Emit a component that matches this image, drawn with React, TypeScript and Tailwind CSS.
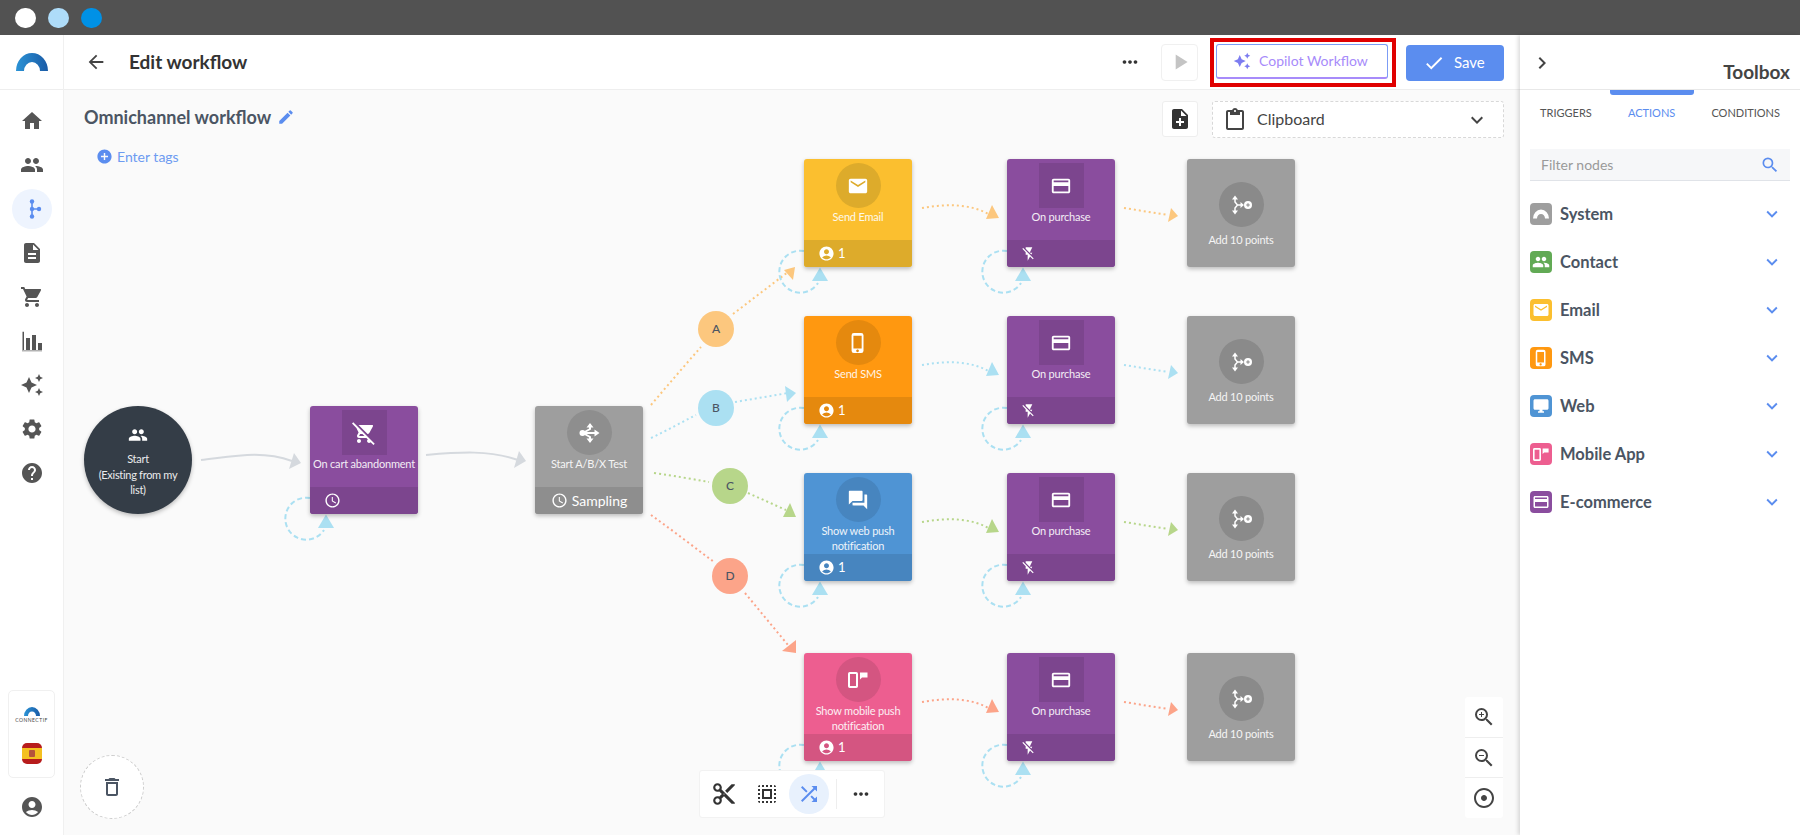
import type { ReactNode } from "react";
import {
  MdAccessTime,
  MdAccountCircle,
  MdAddCircle,
  MdAdjust,
  MdArrowBack,
  MdAutoAwesome,
  MdCheck,
  MdChevronRight,
  MdContentCut,
  MdCreditCard,
  MdDescription,
  MdDesktopWindows,
  MdEdit,
  MdEmail,
  MdExpandMore,
  MdFlashOff,
  MdForum,
  MdHelp,
  MdHome,
  MdMoreHoriz,
  MdNoteAdd,
  MdOutlineContentPaste,
  MdOutlineDelete,
  MdPeople,
  MdPhoneIphone,
  MdPlayArrow,
  MdRemoveShoppingCart,
  MdSearch,
  MdSelectAll,
  MdSettings,
  MdShoppingCart,
  MdShuffle,
  MdZoomIn,
  MdZoomOut,
} from "react-icons/md";

const LogoArc = ({ className }: { className?: string }) => (
  <svg viewBox="0 0 32 18" className={className}>
    <defs>
      <linearGradient id="arcGrad" x1="0" x2="1" y1="0" y2="0">
        <stop offset="0" stopColor="#2b93d6" />
        <stop offset="1" stopColor="#1a5ba6" />
      </linearGradient>
    </defs>
    <path d="M0 18 A16 18 0 0 1 32 18 H24 A8 9 0 0 0 8 18 Z" fill="url(#arcGrad)" />
  </svg>
);

const WhiteArc = () => (
  <svg viewBox="0 0 32 18" className="w-[16px] h-[10px]">
    <path d="M0 18 A16 18 0 0 1 32 18 H24 A8 9 0 0 0 8 18 Z" fill="#fff" />
  </svg>
);

const WorkflowIcon = () => (
  <svg viewBox="0 0 24 24" className="w-6 h-6" fill="#5b8def" stroke="#5b8def">
    <path d="M12 4.5 V19.5 M12 12 H19" strokeWidth="1.6" />
    <circle cx="12" cy="4.5" r="2.2" stroke="none" />
    <circle cx="12" cy="12" r="2.2" stroke="none" />
    <circle cx="12" cy="19.5" r="2.2" stroke="none" />
    <circle cx="19" cy="12" r="2.2" stroke="none" />
  </svg>
);

const ChartIcon = () => (
  <svg viewBox="0 0 24 24" className="w-6 h-6" fill="currentColor">
    <path d="M2.5 2.7 H4 V21 H2.5 Z M6 9 H10 V21 H6 Z M12 6 H16 V21 H12 Z M18 14 H22 V21 H18 Z" />
    <path d="M2 21 H22 V22.5 H2 Z" opacity="0.45" />
  </svg>
);

const SplitIcon = () => (
  <svg viewBox="0 0 24 24" className="w-[24px] h-[24px]" fill="#fff">
    <circle cx="5.5" cy="12" r="3" />
    <path d="M6 12 L13 8 V5 M6 12 L13 16 V19 M6 12 H18" stroke="#fff" strokeWidth="2" fill="none" />
    <path d="M13 2 L16.5 6.5 H9.5 Z M13 22 L16.5 17.5 H9.5 Z M22.5 12 L17.5 8.5 V15.5 Z" />
  </svg>
);

const AddPointsIcon = () => (
  <svg viewBox="0 0 22 20" className="w-[22px] h-[20px]" fill="#fff">
    <path d="M5 0.5 L8 4.5 H2 Z M5 19.5 L8 15.5 H2 Z M14 10 L10.5 7 V13 Z" />
    <path d="M5 4 V7 L7.5 10 L5 13 V16 M7.5 10 H11" stroke="#fff" strokeWidth="1.5" fill="none" />
    <circle cx="18" cy="10" r="4" />
    <path d="M16.2 10 H19.8 M18 8.2 V11.8" stroke="#8a8a8a" strokeWidth="1.1" />
  </svg>
);

const MobilePushIcon = ({ className }: { className?: string }) => (
  <svg viewBox="0 0 20 16" className={className} fill="none">
    <rect x="1" y="1" width="8" height="14" rx="0.8" stroke="#fff" strokeWidth="2" />
    <path d="M12 0.5 H19.5 V5.5 H14 L12 7.5 Z" fill="#fff" />
  </svg>
);

const SpanishFlag = () => (
  <div className="w-5 h-[21px] rounded-[5px] overflow-hidden flex flex-col">
    <div className="h-[5px] bg-[#b71c1c]" />
    <div className="flex-1 bg-[#f4c020] flex items-center justify-center">
      <div className="w-[6px] h-[7px] bg-[#b5533c] rounded-[1px]" />
    </div>
    <div className="h-[5px] bg-[#b71c1c]" />
  </div>
);

const navIcons = [
  <MdHome size={24} />,
  <MdPeople size={24} />,
  <WorkflowIcon />,
  <MdDescription size={24} />,
  <MdShoppingCart size={24} />,
  <ChartIcon />,
  <MdAutoAwesome size={24} />,
  <MdSettings size={24} />,
  <MdHelp size={24} />,
];

const Sidebar = () => (
  <aside className="w-16 shrink-0 bg-white border-r border-[#f0f0f0] flex flex-col">
    <div className="h-[55px] shrink-0 border-b border-[#eeeeee] flex items-center justify-center">
      <LogoArc className="w-8 h-[18px]" />
    </div>
    <nav className="pt-[9px] flex flex-col items-center text-[#555555]">
      {navIcons.map((icon, i) => (
        <div key={i} className="h-[44px] w-full flex items-center justify-center">
          {i === 2 ? (
            <div className="w-10 h-10 rounded-full bg-[#eef4fe] flex items-center justify-center">{icon}</div>
          ) : (
            icon
          )}
        </div>
      ))}
    </nav>
    <div className="mt-auto mx-2 h-[88px] rounded-[5px] border border-[#f0f0f0] flex flex-col items-center pt-4">
      <LogoArc className="w-4 h-[9px]" />
      <span className="text-[5px] leading-[8px] tracking-[0.5px] text-[#444444]">CONNECTIF</span>
      <div className="mt-[19px]">
        <SpanishFlag />
      </div>
    </div>
    <div className="h-[57px] flex items-center justify-center text-[#555555]">
      <MdAccountCircle size={24} />
    </div>
  </aside>
);

const Header = () => (
  <header className="h-[55px] shrink-0 bg-white border-b border-[#eeeeee] flex items-center pl-[21px] pr-4">
    <MdArrowBack size={22} className="text-[#444444]" />
    <h1 className="ml-[22px] mt-[1px] text-[19px] font-bold text-[#333333]">Edit workflow</h1>
    <MdMoreHoriz size={22} className="ml-auto text-[#333333]" />
    <button className="ml-5 w-[37px] h-[37px] rounded-[4px] border border-[#f0f0f0] flex items-center justify-center text-[#c4c4c4]">
      <MdPlayArrow size={26} />
    </button>
    <div className="ml-3 w-[186px] h-[49px] border-4 border-[#e00000] pl-[2px] pt-[2px]">
      <button className="w-[172px] h-[35px] rounded-[3px] border border-[#7c9cf5] border-b-2 border-b-[#a78bfa] flex items-center pl-[16px] gap-[8px] text-[14px] text-[#a78bfa]">
        <MdAutoAwesome size={18} className="text-[#7c7cf0]" />
        Copilot Workflow
      </button>
    </div>
    <button className="ml-[10px] mt-[1px] w-[98px] h-9 rounded-[4px] bg-[#5b8def] flex items-center pl-[17px] gap-[9px] text-[15px] text-white">
      <MdCheck size={22} />
      Save
    </button>
  </header>
);

type NodeProps = {
  x: number;
  y: number;
  bg: string;
  iconBg: string;
  foot?: string;
  square?: boolean;
  icon: ReactNode;
  label: string[];
  footer?: ReactNode;
};

// nodes are placed on the canvas in page coordinates
const FlowNode = ({ x, y, bg, iconBg, foot, square, icon, label, footer }: NodeProps) => (
  <div
    className={`absolute w-[108px] h-[108px] rounded-[3px] shadow-[0_2px_4px_rgba(0,0,0,0.25)] overflow-hidden flex flex-col text-white ${bg}`}
    style={{ left: x - 64, top: y - 90 }}
  >
    <div className={`flex-1 flex flex-col items-center ${footer ? "pt-1" : "pt-[23px]"}`}>
      <div className={`w-[45px] h-[45px] shrink-0 flex items-center justify-center ${square ? "" : "rounded-full"} ${iconBg}`}>
        {icon}
      </div>
      <div className={`text-center text-[11px] leading-[15px] tracking-[-0.2px] whitespace-nowrap opacity-90 ${footer ? "mt-[1px]" : "mt-[5px]"}`}>
        {label.map((line) => (
          <div key={line}>{line}</div>
        ))}
      </div>
    </div>
    {footer && <div className={`h-[27px] shrink-0 flex items-center ${foot}`}>{footer}</div>}
  </div>
);

const personFooter = (
  <div className="pl-[14px] flex items-center gap-[3px] text-[13px]">
    <MdAccountCircle size={17} />1
  </div>
);

const purchaseFooter = (
  <div className="pl-[14px]">
    <MdFlashOff size={16} />
  </div>
);

const rows = [
  {
    y: 159,
    stroke: "#fcc77e",
    bg: "bg-[#fbbf2f]",
    foot: "bg-[#ddab2b]",
    iconBg: "bg-[#ddab2b]",
    icon: <MdEmail size={22} />,
    label: ["Send Email"],
  },
  {
    y: 316,
    stroke: "#abe0f2",
    bg: "bg-[#ff9810]",
    foot: "bg-[#e5890e]",
    iconBg: "bg-[#e5890e]",
    icon: <MdPhoneIphone size={22} />,
    label: ["Send SMS"],
  },
  {
    y: 473,
    stroke: "#b7d68a",
    bg: "bg-[#4f94d4]",
    foot: "bg-[#4785bf]",
    iconBg: "bg-[#4785bf]",
    icon: <MdForum size={22} />,
    label: ["Show web push", "notification"],
  },
  {
    y: 653,
    stroke: "#fca489",
    bg: "bg-[#ed5e90]",
    foot: "bg-[#d45581]",
    iconBg: "bg-[#d45581]",
    icon: <MobilePushIcon className="w-[20px] h-[16px]" />,
    label: ["Show mobile push", "notification"],
  },
];

const Loop = ({ x, y }: { x: number; y: number }) => (
  <g>
    <path
      d={`M${x} ${y + 92} A21 21 0 1 0 ${x + 14} ${y + 124}`}
      fill="none"
      stroke="#abe0f2"
      strokeWidth="2"
      strokeDasharray="5 3"
    />
    <polygon points={`${x + 16},${y + 108.5} ${x + 24},${y + 122} ${x + 8},${y + 122}`} fill="#abe0f2" />
  </g>
);

const Edges = () => (
  <svg className="absolute inset-0 w-full h-full">
    <g transform="translate(-64 -90)">
      <path d="M201 460 C235 456 262 450 292 461" fill="none" stroke="#d5d9de" strokeWidth="2" />
      <polygon points="294,453 301,463 289,469" fill="#d5d9de" />
      <path d="M426 455 C460 452 490 450 518 460" fill="none" stroke="#d5d9de" strokeWidth="2" />
      <polygon points="519,451 526,461 514,468" fill="#d5d9de" />

      <g fill="none" strokeWidth="2" strokeDasharray="2 3">
        <path d="M651 405 C668 385 685 365 701 347" stroke="#fcc77e" />
        <path d="M733 314 L788 272" stroke="#fcc77e" />
        <path d="M651 438 C668 430 682 422 696 415" stroke="#abe0f2" />
        <path d="M735 402 L788 393" stroke="#abe0f2" />
        <path d="M654 473 C675 476 692 479 709 482" stroke="#b7d68a" />
        <path d="M748 493 L786 510" stroke="#b7d68a" />
        <path d="M651 515 C672 530 694 547 714 562" stroke="#fca489" />
        <path d="M745 593 L788 645" stroke="#fca489" />
        {rows.map((r) => (
          <g key={r.y} stroke={r.stroke}>
            <path d={`M922 ${r.y + 49} C945 ${r.y + 45} 970 ${r.y + 44} 990 ${r.y + 56}`} />
            <path d={`M1124 ${r.y + 49} L1168 ${r.y + 56}`} />
          </g>
        ))}
      </g>

      <polygon points="784,270 795,267 793,280" fill="#fcc77e" />
      <polygon points="785,386 796,393 787,402" fill="#abe0f2" />
      <polygon points="790,503 796,517 783,517" fill="#b7d68a" />
      <polygon points="796,640 796,653 782,651" fill="#fca489" />
      {rows.map((r) => (
        <g key={r.y} fill={r.stroke}>
          <polygon points={`992,${r.y + 46} 999,${r.y + 59} 986,${r.y + 60}`} />
          <polygon points={`1171,${r.y + 49} 1178,${r.y + 57} 1168,${r.y + 63}`} />
        </g>
      ))}

      <Loop x={310} y={406} />
      {rows.map((r) => (
        <g key={r.y}>
          <Loop x={804} y={r.y} />
          <Loop x={1007} y={r.y} />
        </g>
      ))}
    </g>
  </svg>
);

const badges = [
  { id: "A", x: 716, y: 329, bg: "bg-[#fcc77e]" },
  { id: "B", x: 716, y: 408, bg: "bg-[#abe0f2]" },
  { id: "C", x: 730, y: 486, bg: "bg-[#b7d68a]" },
  { id: "D", x: 730, y: 576, bg: "bg-[#fca489]" },
];

const Canvas = () => (
  <main className="relative flex-1 bg-[#fafafa] overflow-hidden">
    <Edges />

    <div className="relative flex justify-between pl-5 pr-4 pt-[11px]">
      <div className="flex items-center h-[32px] gap-[6px]">
        <h2 className="text-[18px] font-bold text-[#4b5563]">Omnichannel workflow</h2>
        <MdEdit size={18} className="text-[#5b8def]" />
      </div>
      <div className="flex items-start gap-[14px]">
        <button className="w-9 h-9 rounded-[3px] bg-white border border-[#eeeeee] flex items-center justify-center text-[#333333]">
          <MdNoteAdd size={24} />
        </button>
        <div className="w-[292px] h-[37px] bg-white border border-dashed border-[#d8d8d8] rounded-[3px] flex items-center pl-[10px] pr-[14px] text-[#444444]">
          <MdOutlineContentPaste size={24} />
          <span className="ml-[10px] -mt-[1px] text-[16px]">Clipboard</span>
          <MdExpandMore size={24} className="ml-auto" />
        </div>
      </div>
    </div>
    <div className="relative mt-[9px] ml-[32px] flex items-center gap-[4px] h-[18px] text-[14px] text-[#6d9bf1]">
      <MdAddCircle size={17} className="text-[#5b8def]" />
      Enter tags
    </div>

    <div className="absolute left-5 top-[316px] w-[108px] h-[108px] rounded-full bg-[#343d47] shadow-[0_2px_4px_rgba(0,0,0,0.25)] flex flex-col items-center pt-[19px] text-white">
      <MdPeople size={20} />
      <div className="mt-[6px] text-center text-[11px] leading-[15.5px] tracking-[-0.3px] whitespace-nowrap opacity-90">
        <div>Start</div>
        <div>(Existing from my</div>
        <div>list)</div>
      </div>
    </div>

    <FlowNode
      x={310}
      y={406}
      bg="bg-[#8a4d9e]"
      foot="bg-[#7c458e]"
      iconBg="bg-[#7c458e]"
      square
      icon={<MdRemoveShoppingCart size={24} />}
      label={["On cart abandonment"]}
      footer={
        <div className="pl-[14px]">
          <MdAccessTime size={17} />
        </div>
      }
    />
    <FlowNode
      x={535}
      y={406}
      bg="bg-[#9e9e9e]"
      foot="bg-[#8e8e8e]"
      iconBg="bg-[#8e8e8e]"
      icon={<SplitIcon />}
      label={["Start A/B/X Test"]}
      footer={
        <div className="w-full flex items-center justify-center gap-1 text-[14px]">
          <MdAccessTime size={17} />
          Sampling
        </div>
      }
    />

    {badges.map((b) => (
      <div
        key={b.id}
        className={`absolute w-9 h-9 rounded-full flex items-center justify-center text-[12px] font-medium text-[#4b5563] ${b.bg}`}
        style={{ left: b.x - 18 - 64, top: b.y - 18 - 90 }}
      >
        {b.id}
      </div>
    ))}

    {rows.map((r) => (
      <div key={r.y}>
        <FlowNode x={804} y={r.y} bg={r.bg} foot={r.foot} iconBg={r.iconBg} icon={r.icon} label={r.label} footer={personFooter} />
        <FlowNode
          x={1007}
          y={r.y}
          bg="bg-[#8a4d9e]"
          foot="bg-[#7c458e]"
          iconBg="bg-[#7c458e]"
          square
          icon={<MdCreditCard size={22} />}
          label={["On purchase"]}
          footer={purchaseFooter}
        />
        <FlowNode x={1187} y={r.y} bg="bg-[#9e9e9e]" iconBg="bg-[#8a8a8a]" icon={<AddPointsIcon />} label={["Add 10 points"]} />
      </div>
    ))}

    {/* Trash */}
    <div className="absolute left-4 bottom-4 w-16 h-16 rounded-full bg-white border border-dashed border-[#cccccc] flex items-center justify-center text-[#4b5563]">
      <MdOutlineDelete size={24} />
    </div>

    {/* Bottom toolbar */}
    <div className="absolute left-[635px] bottom-[17px] w-[186px] h-12 bg-white rounded-[3px] border border-[#f2f2f2] flex items-center text-[#333333]">
      <div className="w-[48px] flex justify-center">
        <MdContentCut size={26} />
      </div>
      <div className="w-[38px] flex justify-center">
        <MdSelectAll size={24} />
      </div>
      <div className="ml-[3px] w-10 h-10 rounded-full bg-[#e8f1fd] flex items-center justify-center text-[#5b8def]">
        <MdShuffle size={24} />
      </div>
      <div className="ml-[7px] h-[30px] border-l border-[#eeeeee]" />
      <MdMoreHoriz size={22} className="ml-[13px]" />
    </div>

    {/* Zoom controls */}
    <div className="absolute right-[17px] bottom-[17px] w-[38px] h-[121px] bg-white rounded-[3px] flex flex-col text-[#444444] divide-y divide-[#eeeeee]">
      <div className="flex-1 flex items-center justify-center">
        <MdZoomIn size={24} />
      </div>
      <div className="flex-1 flex items-center justify-center">
        <MdZoomOut size={24} />
      </div>
      <div className="flex-1 flex items-center justify-center">
        <MdAdjust size={24} />
      </div>
    </div>
  </main>
);

const toolboxItems = [
  { name: "System", bg: "bg-[#9e9e9e]", icon: <WhiteArc /> },
  { name: "Contact", bg: "bg-[#62aa55]", icon: <MdPeople size={18} /> },
  { name: "Email", bg: "bg-[#fbbf2f]", icon: <MdEmail size={18} /> },
  { name: "SMS", bg: "bg-[#ff9810]", icon: <MdPhoneIphone size={18} /> },
  { name: "Web", bg: "bg-[#4f94d4]", icon: <MdDesktopWindows size={18} /> },
  { name: "Mobile App", bg: "bg-[#ed5e90]", icon: <MobilePushIcon className="w-[16px] h-[13px]" /> },
  { name: "E-commerce", bg: "bg-[#8a4d9e]", icon: <MdCreditCard size={18} /> },
];

const Toolbox = () => (
  <aside className="relative z-10 w-[280px] shrink-0 bg-white shadow-[-2px_0_4px_rgba(0,0,0,0.14)] flex flex-col">
    <div className="h-[55px] shrink-0 border-b border-[#e8e8e8] flex pl-[10px] pr-[10px] text-[#444444]">
      <MdChevronRight size={24} className="mt-4" />
      <span className="ml-auto mt-[25px] text-[19px] leading-6 font-bold">Toolbox</span>
    </div>
    <div className="flex justify-between px-5 pt-[15px] text-[11px] leading-4 text-[#555555]">
      <span>TRIGGERS</span>
      <span className="relative text-[#5b8def]">
        ACTIONS
        <span className="absolute top-[-15px] left-1/2 -translate-x-1/2 w-[84px] h-[5px] rounded-b-[3px] bg-[#5b8def]" />
      </span>
      <span>CONDITIONS</span>
    </div>
    <div className="mt-[28px] mx-[10px] h-8 bg-[#f6f7f9] border-b border-[#e0e3e8] flex items-center pl-[11px] pr-[10px]">
      <span className="text-[14px] text-[#9a9a9a]">Filter nodes</span>
      <MdSearch size={20} className="ml-auto text-[#5b8def]" />
    </div>
    <div className="mt-[9px]">
      {toolboxItems.map((item) => (
        <div key={item.name} className="h-12 pl-[10px] pr-[17px] flex items-center">
          <div className={`w-[22px] h-[22px] rounded-[4px] flex items-center justify-center text-white ${item.bg}`}>
            {item.icon}
          </div>
          <span className="ml-2 text-[16.5px] font-bold text-[#4b5563]">{item.name}</span>
          <MdExpandMore size={22} className="ml-auto text-[#5b8def]" />
        </div>
      ))}
    </div>
  </aside>
);

export default function App() {
  return (
    <div className="w-[1800px] h-[835px] overflow-hidden flex flex-col font-['Lato',sans-serif]">
      <div className="h-[35px] shrink-0 bg-[#525252] flex items-center pl-[15px] gap-[12px]">
        <div className="w-[21px] h-5 rounded-full bg-white" />
        <div className="w-[21px] h-5 rounded-full bg-[#aedcf9]" />
        <div className="w-[21px] h-5 rounded-full bg-[#0091e6]" />
      </div>
      <div className="flex-1 flex min-h-0">
        <Sidebar />
        <div className="flex-1 min-w-0 flex flex-col">
          <Header />
          <Canvas />
        </div>
        <Toolbox />
      </div>
    </div>
  );
}
